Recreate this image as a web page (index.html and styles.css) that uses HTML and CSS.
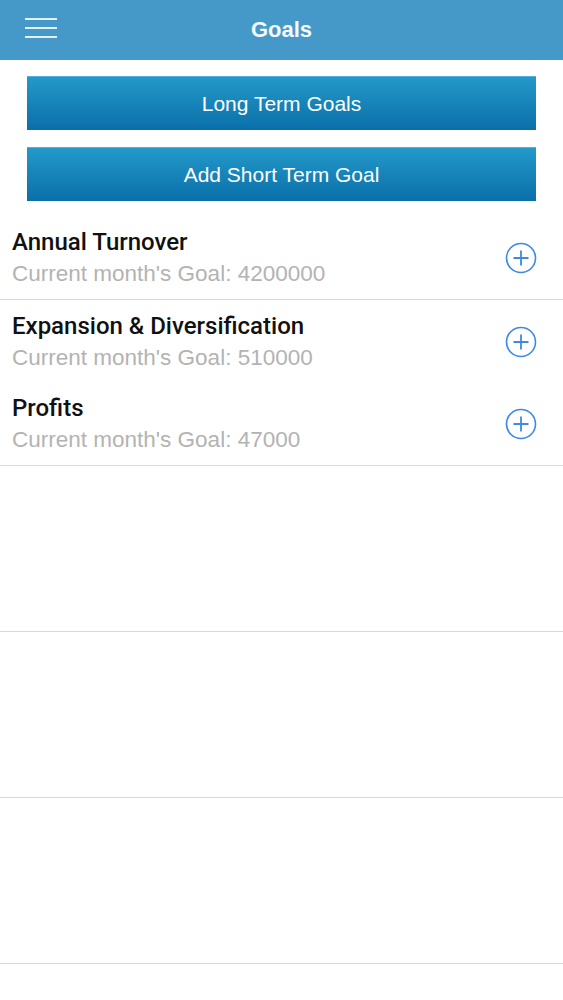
FILE: index.html
```html
<!DOCTYPE html>
<html lang="en">
<head>
    <meta charset="UTF-8">
    <meta name="viewport" content="width=device-width, initial-scale=1.0">
    <title>Goals</title>
    <link rel="stylesheet" href="styles.css">
</head>
<body>
    <header class="navbar">
        <div class="menu-btn">
            <span></span>
            <span></span>
            <span></span>
        </div>
        <div class="title">Goals</div>
    </header>
    <div class="actions">
        <button class="action-btn">Long Term Goals</button>
        <button class="action-btn">Add Short Term Goal</button>
    </div>
    <ul class="goal-list">
        <li class="goal lined">
            <div class="goal-text">
                <div class="goal-name">Annual Turnover</div>
                <div class="goal-sub">Current month's Goal: 4200000</div>
            </div>
            <svg class="add-icon" width="32" height="32" viewBox="0 0 32 32">
                <circle cx="16" cy="16" r="14.5" fill="none" stroke="#3d8ae0" stroke-width="1.6"/>
                <path d="M16 8.5v15M8.5 16h15" stroke="#3d8ae0" stroke-width="1.8"/>
            </svg>
        </li>
        <li class="goal">
            <div class="goal-text">
                <div class="goal-name">Expansion &amp; Diversification</div>
                <div class="goal-sub">Current month's Goal: 510000</div>
            </div>
            <svg class="add-icon" width="32" height="32" viewBox="0 0 32 32">
                <circle cx="16" cy="16" r="14.5" fill="none" stroke="#3d8ae0" stroke-width="1.6"/>
                <path d="M16 8.5v15M8.5 16h15" stroke="#3d8ae0" stroke-width="1.8"/>
            </svg>
        </li>
        <li class="goal lined">
            <div class="goal-text">
                <div class="goal-name">Profits</div>
                <div class="goal-sub">Current month's Goal: 47000</div>
            </div>
            <svg class="add-icon" width="32" height="32" viewBox="0 0 32 32">
                <circle cx="16" cy="16" r="14.5" fill="none" stroke="#3d8ae0" stroke-width="1.6"/>
                <path d="M16 8.5v15M8.5 16h15" stroke="#3d8ae0" stroke-width="1.8"/>
            </svg>
        </li>
        <li class="empty"></li>
        <li class="empty"></li>
        <li class="empty"></li>
    </ul>
</body>
</html>
```

FILE: styles.css
```css
body {
    font-family: "Liberation Sans", Arial, sans-serif;
    background-color: #ffffff;
    margin: 0;
    padding: 0;
}

.navbar {
    height: 60px;
    background-color: #4499c9;
    display: flex;
    align-items: center;
    justify-content: center;
    position: relative;
}

.menu-btn {
    position: absolute;
    left: 25px;
    top: 18px;
    width: 32px;
    display: flex;
    flex-direction: column;
    gap: 7.5px;
}

.menu-btn span {
    display: block;
    height: 1.5px;
    background-color: #e4f1fa;
}

.title {
    color: #f4faff;
    font-size: 22px;
    font-weight: bold;
}

.actions {
    padding: 16px 27px 16px 27px;
    display: flex;
    flex-direction: column;
    gap: 17px;
}

.action-btn {
    height: 54px;
    border: none;
    border-top: 1px solid #52b0dc;
    background: linear-gradient(to bottom, #2399c9, #0b6fa9);
    color: #ffffff;
    font-family: inherit;
    font-size: 21px;
    padding: 0;
}

.goal-list {
    list-style: none;
    margin: 0;
    padding: 0;
}

.goal {
    height: 83px;
    box-sizing: border-box;
    display: flex;
    align-items: center;
    padding: 0 26px 0 12px;
}

.goal.lined {
    border-bottom: 1px solid #d9d9d9;
}

.goal-text {
    flex: 1;
    padding-top: 2px;
}

.goal-name {
    font-family: Roboto, "Liberation Sans", sans-serif;
    font-weight: 500;
    color: #111111;
    font-size: 24px;
    line-height: 30px;
}

.goal-sub {
    color: #b3b3b3;
    font-size: 22.5px;
    line-height: 34px;
}

.empty {
    height: 166px;
    box-sizing: border-box;
    border-bottom: 1px solid #d9d9d9;
}
```
